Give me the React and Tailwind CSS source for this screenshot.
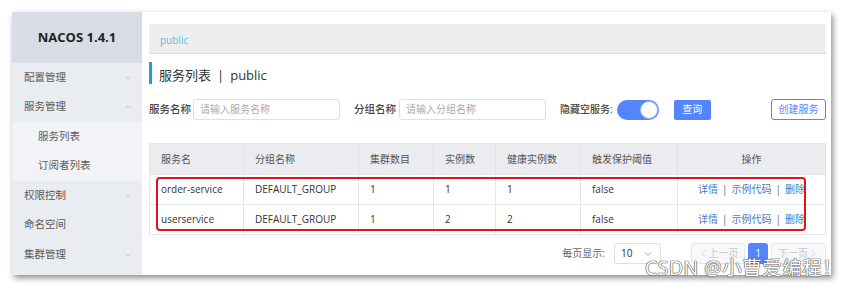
import React from 'react';
import { ChevronDown, ChevronUp, ChevronLeft, ChevronRight } from 'lucide-react';

const font = { fontFamily: '"Open Sans", "Noto Sans CJK SC", sans-serif' };

const menu = [
  { label: '配置管理', arrow: 'down' },
  { label: '服务管理', arrow: 'up' },
  { label: '服务列表', sub: true },
  { label: '订阅者列表', sub: true },
  { label: '权限控制', arrow: 'down' },
  { label: '命名空间' },
  { label: '集群管理', arrow: 'down' },
];

const cols = [
  { title: '服务名', w: 'w-[93px]' },
  { title: '分组名称', w: 'w-[115px]' },
  { title: '集群数目', w: 'w-[75px]' },
  { title: '实例数', w: 'w-[62px]' },
  { title: '健康实例数', w: 'w-[85px]' },
  { title: '触发保护阈值', w: 'w-[97px]' },
  { title: '操作', w: 'flex-1', center: true },
];

const rows = [
  ['order-service', 'DEFAULT_GROUP', '1', '1', '1', 'false'],
  ['userservice', 'DEFAULT_GROUP', '1', '2', '2', 'false'],
];

const Sidebar = () => (
  <div className="w-[130px] shrink-0 bg-[#e9ecf0] flex flex-col">
    <div className="h-[51px] bg-[#d8dde5] flex items-center justify-center text-[13px] font-bold text-[#222]">
      NACOS 1.4.1
    </div>
    <div className="flex flex-col">
      {menu.map((m) => (
        <div
          key={m.label}
          className={`h-[29.5px] flex items-center justify-between text-[10.5px] text-[#5a5a5a] ${
            m.sub ? 'bg-[#f2f3f6] pl-[26px]' : 'pl-[12px]'
          } pr-[9px]`}
        >
          <span>{m.label}</span>
          {m.arrow === 'down' && <ChevronDown className="w-[10px] h-[10px] text-[#aaa]" strokeWidth={1.5} />}
          {m.arrow === 'up' && <ChevronUp className="w-[10px] h-[10px] text-[#aaa]" strokeWidth={1.5} />}
        </div>
      ))}
    </div>
  </div>
);

const Filters = () => (
  <div className="flex items-center mt-[15px] h-[21px] text-[10.5px]">
    <span className="text-[#444] font-medium w-[44px]">服务名称</span>
    <div className="w-[147px] h-[21px] border border-[#dcdfe6] rounded-[3px] flex items-center px-[6px] text-[#aaa] text-[10px]">
      请输入服务名称
    </div>
    <span className="text-[#444] font-medium ml-[14px] w-[45px]">分组名称</span>
    <div className="w-[147px] h-[21px] border border-[#dcdfe6] rounded-[3px] flex items-center px-[6px] text-[#aaa] text-[10px]">
      请输入分组名称
    </div>
    <span className="text-[#444] font-medium ml-[14px] text-[10px]">隐藏空服务:</span>
    <div className="w-[42px] h-[20px] rounded-full bg-[#5584ff] relative ml-[4px]">
      <div className="absolute right-[1px] top-[1px] w-[18px] h-[18px] rounded-full bg-white border border-[#9fb6f5]" />
    </div>
    <div className="ml-[15px] w-[37px] h-[20px] bg-[#5584ff] text-white rounded-[2px] flex items-center justify-center text-[10px]">
      查询
    </div>
    <div className="ml-auto w-[55px] h-[21px] border border-[#5584ff] text-[#5584ff] rounded-[3px] flex items-center justify-center text-[10px]">
      创建服务
    </div>
  </div>
);

const Table = () => (
  <div className="relative mt-[23px] border border-[#e6e7eb] text-[10px] text-[#333]">
    <div className="flex h-[30px] bg-[#ebecf0] text-[#555]">
      {cols.map((c, i) => (
        <div
          key={c.title}
          className={`${c.w} flex items-center px-[11px] ${i > 0 ? 'border-l border-[#dfe1e6]' : ''} ${c.center ? 'justify-center' : ''}`}
        >
          {c.title}
        </div>
      ))}
    </div>
    {rows.map((r, ri) => (
      <div key={ri} className="flex h-[30px] border-t border-[#e6e7eb] bg-white">
        {r.map((v, i) => (
          <div key={i} className={`${cols[i].w} flex items-center px-[11px] ${i > 0 ? 'border-l border-[#e6e7eb]' : ''}`}>
            {v}
          </div>
        ))}
        <div className="flex-1 flex items-center justify-center border-l border-[#e6e7eb] text-[#3b7ecf] gap-[4px]">
          <span>详情</span>
          <span className="text-[#666]">|</span>
          <span>示例代码</span>
          <span className="text-[#666]">|</span>
          <span>删除</span>
        </div>
      </div>
    ))}
    <div className="absolute left-[6px] top-[33px] w-[650px] h-[54px] border-2 border-[#e0141a] rounded-[4px] pointer-events-none" />
  </div>
);

const Pagination = () => (
  <div className="flex items-center justify-end mt-[8px] text-[10px]">
    <span className="text-[#666] mr-[9px]">每页显示:</span>
    <div className="w-[47px] h-[21px] border border-[#dcdfe6] rounded-[3px] flex items-center justify-between px-[6px] text-[#333]">
      <span>10</span>
      <ChevronDown className="w-[12px] h-[12px] text-[#888]" strokeWidth={1.5} />
    </div>
    <div className="ml-[30px] w-[54px] h-[21px] border border-[#e6e7eb] rounded-[3px] bg-[#f7f8fa] flex items-center justify-center text-[#c8c9cc]">
      <ChevronLeft className="w-[11px] h-[11px]" strokeWidth={1.5} />
      <span>上一页</span>
    </div>
    <div className="ml-[3px] w-[20px] h-[21px] rounded-[3px] bg-[#5584ff] text-white flex items-center justify-center">
      1
    </div>
    <div className="ml-[3px] w-[55px] h-[21px] border border-[#e6e7eb] rounded-[3px] bg-[#f7f8fa] flex items-center justify-center text-[#c8c9cc]">
      <span>下一页</span>
      <ChevronRight className="w-[11px] h-[11px]" strokeWidth={1.5} />
    </div>
  </div>
);

export default function App() {
  return (
    <div className="w-[844px] h-[290px] bg-white relative overflow-hidden" style={font}>
      <div className="absolute left-[12px] top-[12px] w-[819px] h-[263px] bg-white flex shadow-[2px_3px_6px_rgba(0,0,0,0.45)]">
        <Sidebar />
        <div className="flex-1 pl-[7px] pr-[5px] pt-[12px]">
          <div className="h-[30px] bg-[#eeeeee] border-b border-[#dcdcdc] flex items-center pl-[11px] pt-[3px] text-[10px] text-[#4fc1e0]">
            public
          </div>
          <div className="mt-[8px] h-[22px] border-l-[3px] border-[#1f9fd9] flex items-center pl-[7px] pt-[5px] text-[13px] text-[#333]">
            服务列表 <span className="mx-[6px]">|</span> public
          </div>
          <Filters />
          <Table />
          <Pagination />
        </div>
      </div>
      <div
        className="absolute left-[645px] top-[258px] text-[19.5px] text-white leading-none tracking-[0.5px]"
        style={{ textShadow: '0 0 1px #444, 0 0 1px #444, 0 0 1px #444' }}
      >
        CSDN @小曹爱编程！
      </div>
    </div>
  );
}
